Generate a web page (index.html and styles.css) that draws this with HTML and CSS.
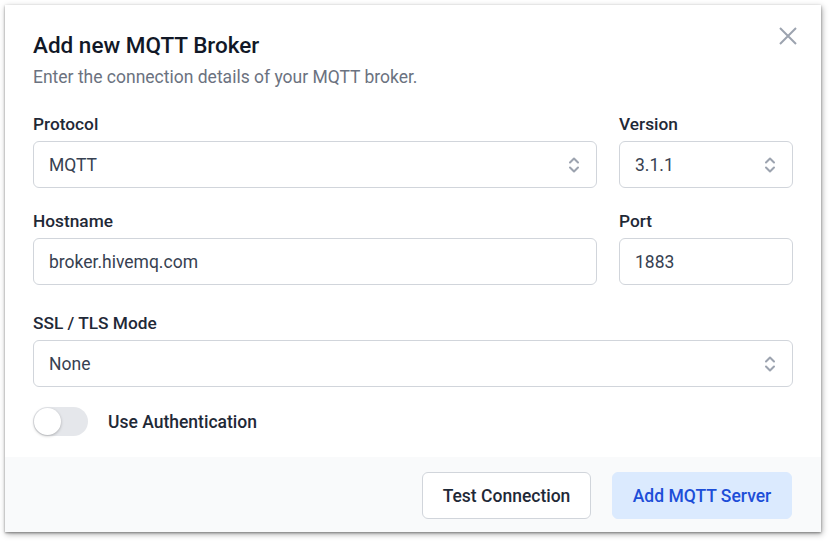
FILE: index.html
```html
<!DOCTYPE html>
<html lang="en">
<head>
<meta charset="utf-8">
<title>Add new MQTT Broker</title>
<link rel="stylesheet" href="styles.css">
</head>
<body>
<div class="dialog">
  <div class="content">
    <button class="close" aria-label="Close">
      <svg width="18" height="18" viewBox="0 0 18 18"><path d="M1 1L17 17M17 1L1 17" stroke="#9ca3af" stroke-width="2" fill="none"/></svg>
    </button>
    <h1 class="title">Add new MQTT Broker</h1>
    <p class="subtitle">Enter the connection details of your MQTT broker.</p>

    <div class="row row-first">
      <div class="field grow">
        <label class="label">Protocol</label>
        <div class="control select">
          <span>MQTT</span>
          <svg class="chev" width="12" height="18" viewBox="0 0 12 18"><path d="M2 6.5L6 2.5L10 6.5M2 11.5L6 15.5L10 11.5" stroke="#9ca3af" stroke-width="2" fill="none" stroke-linecap="round" stroke-linejoin="round"/></svg>
        </div>
      </div>
      <div class="field side">
        <label class="label">Version</label>
        <div class="control select">
          <span>3.1.1</span>
          <svg class="chev" width="12" height="18" viewBox="0 0 12 18"><path d="M2 6.5L6 2.5L10 6.5M2 11.5L6 15.5L10 11.5" stroke="#9ca3af" stroke-width="2" fill="none" stroke-linecap="round" stroke-linejoin="round"/></svg>
        </div>
      </div>
    </div>

    <div class="row row-second">
      <div class="field grow">
        <label class="label">Hostname</label>
        <div class="control"><span>broker.hivemq.com</span></div>
      </div>
      <div class="field side">
        <label class="label">Port</label>
        <div class="control"><span>1883</span></div>
      </div>
    </div>

    <div class="row row-third">
      <div class="field grow">
        <label class="label">SSL / TLS Mode</label>
        <div class="control select">
          <span>None</span>
          <svg class="chev" width="12" height="18" viewBox="0 0 12 18"><path d="M2 6.5L6 2.5L10 6.5M2 11.5L6 15.5L10 11.5" stroke="#9ca3af" stroke-width="2" fill="none" stroke-linecap="round" stroke-linejoin="round"/></svg>
        </div>
      </div>
    </div>

    <div class="toggle-row">
      <span class="toggle"><span class="knob"></span></span>
      <span class="toggle-label">Use Authentication</span>
    </div>
  </div>
  <div class="footer">
    <button class="btn btn-secondary">Test Connection</button>
    <button class="btn btn-primary">Add MQTT Server</button>
  </div>
</div>
</body>
</html>
```

FILE: styles.css
```css
* { box-sizing: border-box; }
html, body { margin: 0; padding: 0; background: #ffffff; }
body {
  font-family: Roboto, "Liberation Sans", sans-serif;
  width: 829px;
  height: 541px;
  overflow: hidden;
}
.dialog {
  margin: 5px 0 0 5px;
  width: 816px;
  height: 527px;
  background: #fff;
  box-shadow: 0 1px 2px rgba(0,0,0,0.35), 1px 2px 6px rgba(0,0,0,0.35);
  display: flex;
  flex-direction: column;
}
.content {
  position: relative;
  padding: 26px 28px 21px 28px;
  flex: 1;
}
.close {
  position: absolute;
  top: 22px;
  right: 24px;
  padding: 0;
  border: 0;
  background: none;
  width: 18px;
  height: 18px;
  display: block;
}
.close svg { display: block; }
.title {
  margin: 0;
  font-size: 22.5px;
  line-height: 28px;
  font-weight: 500;
  color: #111827;
}
.subtitle {
  margin: 6px 0 0 0;
  font-size: 17.5px;
  line-height: 24px;
  color: #6b7280;
}
.row {
  display: flex;
  gap: 22px;
}
.row-first { margin-top: 23px; }
.row-second { margin-top: 21px; }
.row-third { margin-top: 26px; }
.field { display: flex; flex-direction: column; }
.grow { flex: 1; }
.side { width: 174px; }
.label {
  font-size: 17.3px;
  line-height: 24px;
  font-weight: 500;
  color: #1f2937;
  margin-bottom: 5px;
}
.control {
  height: 47px;
  border: 1px solid #d1d5db;
  border-radius: 6px;
  padding: 0 16px 0 15px;
  display: flex;
  align-items: center;
  justify-content: space-between;
  font-size: 17.5px;
  color: #374151;
  background: #fff;
}
.chev { display: block; }
.toggle-row {
  margin-top: 20px;
  display: flex;
  align-items: center;
  gap: 20px;
  height: 29px;
}
.toggle {
  width: 55px;
  height: 29px;
  border-radius: 15px;
  background: #e5e7eb;
  position: relative;
  display: block;
}
.knob {
  position: absolute;
  left: 1px;
  top: 1px;
  width: 27px;
  height: 27px;
  border-radius: 50%;
  background: #fff;
  box-shadow: 0 1px 3px rgba(0,0,0,0.25);
}
.toggle-label {
  font-size: 17.5px;
  font-weight: 500;
  color: #1f2937;
}
.footer {
  height: 75px;
  background: #f9fafb;
  display: flex;
  justify-content: flex-end;
  align-items: flex-start;
  gap: 21px;
  padding: 15px 29px 0 0;
}
.btn {
  height: 47px;
  border-radius: 6px;
  font-family: inherit;
  font-size: 17.5px;
  font-weight: 500;
  padding: 0;
  cursor: pointer;
}
.btn-secondary {
  width: 169px;
  background: #fff;
  border: 1px solid #d1d5db;
  color: #1f2937;
}
.btn-primary {
  width: 180px;
  background: #dbeafe;
  border: 1px solid #dbeafe;
  color: #1d4ed8;
}
```
